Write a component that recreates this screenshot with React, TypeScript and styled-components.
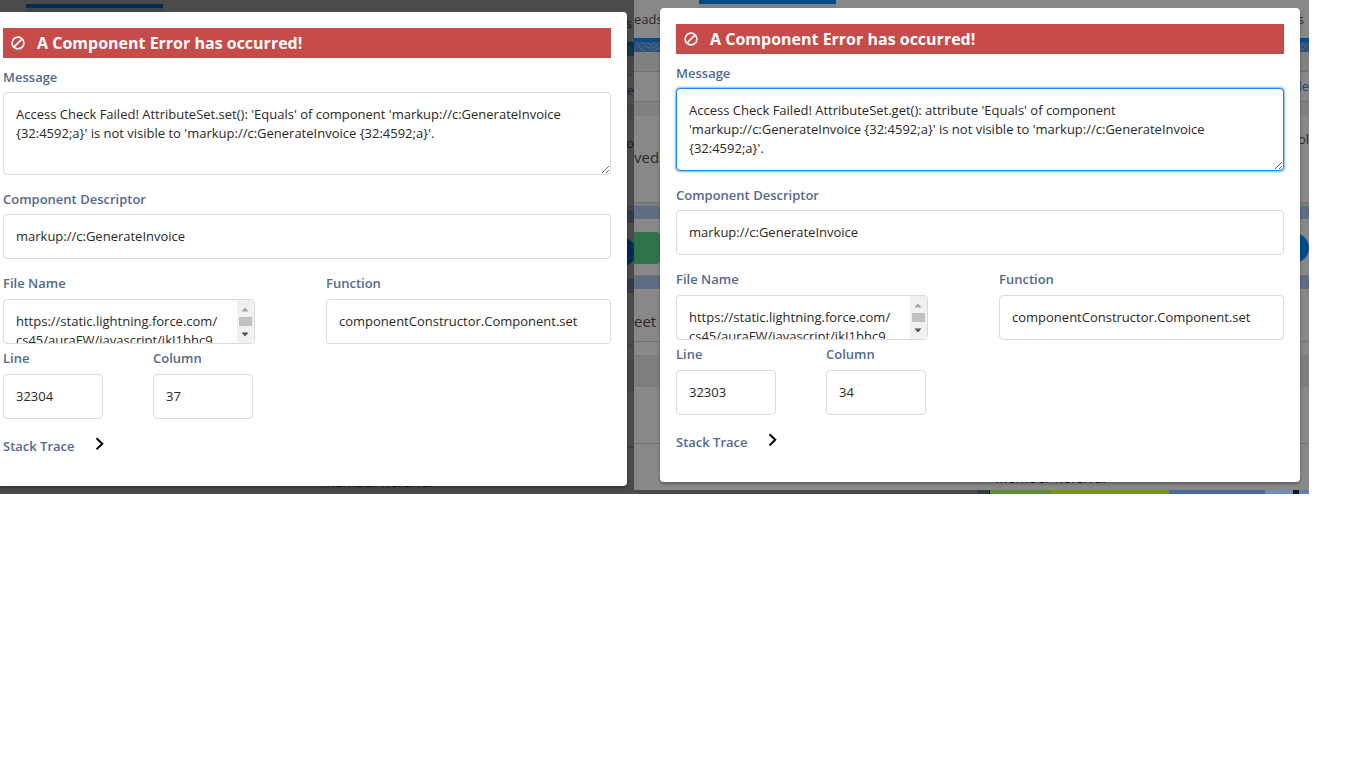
import React, { useEffect, useId, useRef } from "react";
import styled, { createGlobalStyle } from "styled-components";

const GlobalStyle = createGlobalStyle`
  * { box-sizing: border-box; }
  body {
    margin: 0;
    background: #ffffff;
    color: #2b2826;
    font: 13px/19px "Open Sans", sans-serif;
  }
`;

const Screens = styled.main`
  display: grid;
  grid-template-columns: 634fr 675fr;
  margin-right: 57px;
`;

const Pane = styled.section<{ $inset: string }>`
  position: relative;
  overflow: hidden;
  padding: ${(p) => p.$inset};
`;

/* The dimmed application page that shows around the dialog. */
const Backdrop = styled.div<{ $dark?: boolean }>`
  position: absolute;
  inset: 0;
  overflow: hidden;
  padding-top: ${(p) => (p.$dark ? 4 : 0)}px;
  background: ${(p) => (p.$dark ? "#4a4a4a" : "#888888")};
  --bar: ${(p) => (p.$dark ? "#002a4e" : "#014b8a")};
  --wave: ${(p) => (p.$dark ? "#1b2f45" : "#2f5379")};
  --curl: ${(p) => (p.$dark ? "#26394e" : "#4b6b8d")};
  --head: ${(p) => (p.$dark ? "#464646" : "#808080")};
  --band: ${(p) => (p.$dark ? "#343b47" : "#606c81")};
  --rule: ${(p) => (p.$dark ? "#3c3c3c" : "#727272")};
  --stripe: ${(p) => (p.$dark ? "#434343" : "#7d7d7d")};
  --text: ${(p) => (p.$dark ? "#171717" : "#292929")};
  --link: ${(p) => (p.$dark ? "#15233b" : "#26426f")};
`;

const Band = styled.div<{ $h: number; $bg?: string; $link?: boolean; $rule?: boolean; $top?: number }>`
  display: flex;
  align-items: center;
  justify-content: space-between;
  height: ${(p) => p.$h}px;
  padding-top: ${(p) => p.$top ?? 0}px;
  background: ${(p) => p.$bg ?? "transparent"};
  color: ${(p) => (p.$link ? "var(--link)" : "var(--text)")};
  border-bottom: ${(p) => (p.$rule ? "1px solid var(--rule)" : "none")};
  white-space: nowrap;
`;

const TabBand = styled(Band)`
  position: relative;
`;

const DetailBand = styled(Band)`
  align-items: flex-start;
`;

const ActiveTab = styled.div<{ $left: number; $dark?: boolean }>`
  position: absolute;
  top: 0;
  left: ${(p) => p.$left}px;
  width: 137px;
  height: 38px;
  border-top: 4px solid var(--bar);
  background: ${(p) => (p.$dark ? "#40444b" : "#7a808c")};
`;

const Trail = styled.span<{ $end?: number }>`
  margin-left: auto;
  padding-right: ${(p) => p.$end ?? 0}px;
`;

const Large = styled.span<{ $top?: number }>`
  padding-top: ${(p) => p.$top ?? 0}px;
  font-size: 15px;
`;

const GreenButton = styled.span`
  width: 26px;
  height: 32px;
  border-radius: 0 4px 4px 0;
  background: #2d7249;
`;

const Dot = styled.span<{ $shift: number }>`
  width: 30px;
  height: 30px;
  margin: 0 ${(p) => p.$shift}px 0 auto;
  border-radius: 50%;
  background: var(--bar);
`;

const Caption = styled.div<{ $indent: number }>`
  margin-top: 24px;
  padding-left: ${(p) => p.$indent}px;
  font-size: 14px;
  color: #0c0c0c;
`;

const Thumbs = styled.div`
  position: absolute;
  right: 0;
  bottom: 0;
  left: 0;
  display: grid;
  grid-template-columns: 343fr 12fr 1fr 60fr 119fr 96fr 28fr 6fr 10fr;
  height: 4px;
`;

const Thumb = styled.span<{ $bg: string }>`
  background: ${(p) => p.$bg};
`;

const Dialog = styled.form<{ $flush?: boolean }>`
  position: relative;
  min-height: 474px;
  padding: 16px 16px 0 ${(p) => (p.$flush ? 3 : 16)}px;
  border-radius: ${(p) => (p.$flush ? "0 4px 4px 0" : "4px")};
  background: #ffffff;
  box-shadow: 0 2px 3px rgba(0, 0, 0, 0.3);
`;

const Banner = styled.h2`
  display: flex;
  align-items: center;
  gap: 12px;
  height: 30px;
  margin: 0 0 10px;
  padding-left: 8px;
  background: #c74b48;
  color: #ffffff;
  font-size: 16px;
  line-height: 20px;
  font-weight: 700;
`;

const Field = styled.div<{ $width?: string }>`
  width: ${(p) => p.$width ?? "100%"};
`;

const Label = styled.label<{ $gap?: number }>`
  display: block;
  height: 19px;
  margin-bottom: ${(p) => p.$gap ?? 5}px;
  color: #54698d;
  font-weight: 600;
`;

const Input = styled.input`
  display: block;
  width: 100%;
  height: 45px;
  padding: 0 12px 2px;
  border: 1px solid #dddbda;
  border-radius: 4px;
  background: #ffffff;
  color: inherit;
  font: inherit;
`;

const TextArea = styled.textarea`
  display: block;
  width: 100%;
  height: 83px;
  padding: 12px;
  border: 1px solid #dddbda;
  border-radius: 4px;
  outline: none;
  background: #ffffff;
  color: inherit;
  font: inherit;
  resize: vertical;

  &:focus {
    border-color: #1589ee;
    box-shadow: 0 0 3px #0070d2;
  }
`;

const FileBox = styled.div`
  display: flex;
  height: 45px;
  overflow: hidden;
  border: 1px solid #dddbda;
  border-radius: 4px;
`;

const FileText = styled.textarea`
  flex: 1;
  min-width: 0;
  height: 43px;
  padding: 12px 0 0 12px;
  overflow: hidden;
  border: 0;
  outline: none;
  background: transparent;
  color: inherit;
  font: inherit;
  white-space: pre;
  resize: none;
`;

const Rows = styled.div`
  display: grid;
  gap: 15px;
`;

const Row = styled.div<{ $gap: number; $top?: number }>`
  display: flex;
  gap: ${(p) => p.$gap}px;
  margin-top: ${(p) => p.$top ?? 0}px;
`;

const Stack = styled.button`
  display: flex;
  align-items: flex-start;
  gap: 20px;
  margin-top: 18px;
  padding: 0;
  border: 0;
  background: none;
  color: #54698d;
  font: inherit;
  font-weight: 600;
`;

const BanIcon = () => (
  <svg width="14" height="14" viewBox="0 0 14 14" fill="none" stroke="#fff" strokeWidth="1.6" aria-hidden="true">
    <circle cx="7" cy="7" r="5.9" />
    <path d="M3.4 10.6 10.6 3.4" />
  </svg>
);

const Chevron = () => (
  <svg width="10" height="14" viewBox="0 0 10 14" fill="none" stroke="#000" strokeWidth="2" aria-hidden="true">
    <path d="M1.5 1.2 7.3 6.8 1.5 12.4" />
  </svg>
);

const Curls = () => (
  <svg width="30" height="10" viewBox="0 0 30 10" fill="none" stroke="var(--curl)" aria-hidden="true">
    <path d="M3 0q1 6 8 9M9 0q1 5 7 6t9-6M13 0q2 3 4 3t4-3M20 9q6-2 8-7" />
  </svg>
);

const ScrollBar = () => (
  <svg width="17" height="43" viewBox="0 0 17 43" aria-hidden="true">
    <rect width="17" height="43" fill="#f1f1f1" />
    <path d="M4.5 11.500 8 7.500 11.500 11.500z" fill="#a3a3a3" />
    <rect x="2" y="17" width="13" height="9" fill="#c1c1c1" />
    <path d="M4.500 32.500h7L8 36.500z" fill="#505050" />
  </svg>
);

type ErrorInfo = {
  message: string;
  line: string;
  column: string;
  focused?: boolean;
};

function ErrorDialog({ message, line, column, focused }: ErrorInfo) {
  const id = useId();
  const area = useRef<HTMLTextAreaElement>(null);
  useEffect(() => {
    if (focused) area.current?.focus({ preventScroll: true });
  }, [focused]);

  return (
    <Dialog $flush={!focused}>
      <Banner>
        <BanIcon />
        A Component Error has occurred!
      </Banner>
      <Rows>
        <Field>
          <Label htmlFor={id + "m"}>Message</Label>
          <TextArea ref={area} id={id + "m"} defaultValue={message} spellCheck={false} />
        </Field>
        <Field>
          <Label htmlFor={id + "d"}>Component Descriptor</Label>
          <Input id={id + "d"} defaultValue="markup://c:GenerateInvoice" />
        </Field>
        <Row $gap={71}>
          <Field $width="252px">
            <Label $gap={6} htmlFor={id + "f"}>File Name</Label>
            <FileBox>
              <FileText
                id={id + "f"}
                spellCheck={false}
                defaultValue={"https://static.lightning.force.com/\ncs45/auraFW/javascript/jkI1bhc9"}
              />
              <ScrollBar />
            </FileBox>
          </Field>
          <Field $width="285px">
            <Label $gap={6} htmlFor={id + "n"}>Function</Label>
            <Input id={id + "n"} defaultValue="componentConstructor.Component.set" />
          </Field>
        </Row>
      </Rows>
      <Row $gap={50} $top={5}>
        <Field $width="100px">
          <Label $gap={6} htmlFor={id + "l"}>Line</Label>
          <Input id={id + "l"} defaultValue={line} />
        </Field>
        <Field $width="100px">
          <Label $gap={6} htmlFor={id + "c"}>Column</Label>
          <Input id={id + "c"} defaultValue={column} />
        </Field>
      </Row>
      <Stack type="button">
        Stack Trace
        <Chevron />
      </Stack>
    </Dialog>
  );
}

function AppPage({ dark }: { dark?: boolean }) {
  return (
    <Backdrop $dark={dark} aria-hidden="true">
      <TabBand $h={38}>
        <ActiveTab $left={dark ? 26 : 65} $dark={dark} />
        {!dark && <span>eads</span>}
        <Trail $end={dark ? 2 : 5}>s</Trail>
      </TabBand>
      <Band $h={4} $bg="var(--bar)" />
      <Band $h={10} $bg="var(--wave)">
        <Curls />
        <Curls />
      </Band>
      <Band $h={20} $bg="var(--head)" $rule />
      <Band $h={30} $link $rule>
        <Trail>le</Trail>
      </Band>
      <Band $h={14} $bg="var(--head)" />
      <DetailBand $h={87} $top={14} $rule>
        {!dark && <Large $top={18}>ved</Large>}
        <Trail>{dark ? "o" : "ol"}</Trail>
      </DetailBand>
      <Band $h={3} $bg="var(--stripe)" />
      <Band $h={13} $bg="var(--band)" />
      <Band $h={57} $top={2} $rule>
        {!dark && <GreenButton />}
        <Dot $shift={dark ? -2 : 0} />
      </Band>
      <Band $h={13} $bg="var(--band)" />
      <Band $h={53} $top={12} $rule>
        {!dark && <Large>eet</Large>}
      </Band>
      <Band $h={13} />
      <Band $h={32} $bg="var(--stripe)" />
      <Band $h={57} $rule />
      <Caption $indent={dark ? 322 : 361}>Member Referral</Caption>
      {!dark && (
        <Thumbs>
          {["#4a4a4a", "#373b43", "#0b0b0b", "#5d8d39", "#76921f", "#486b9f", "#6f8db5", "#10151c", "#5f7fae"].map(
            (bg) => (
              <Thumb key={bg} $bg={bg} />
            ),
          )}
        </Thumbs>
      )}
    </Backdrop>
  );
}

export default function App() {
  return (
    <>
      <GlobalStyle />
      <Screens>
        <Pane $inset="12px 7px 8px 0">
          <AppPage dark />
          <ErrorDialog
            message="Access Check Failed! AttributeSet.set(): 'Equals' of component 'markup://c:GenerateInvoice {32:4592;a}' is not visible to 'markup://c:GenerateInvoice {32:4592;a}'."
            line="32304"
            column="37"
          />
        </Pane>
        <Pane $inset="8px 9px 12px 26px">
          <AppPage />
          <ErrorDialog
            focused
            message="Access Check Failed! AttributeSet.get(): attribute 'Equals' of component 'markup://c:GenerateInvoice {32:4592;a}' is not visible to 'markup://c:GenerateInvoice {32:4592;a}'."
            line="32303"
            column="34"
          />
        </Pane>
      </Screens>
    </>
  );
}
